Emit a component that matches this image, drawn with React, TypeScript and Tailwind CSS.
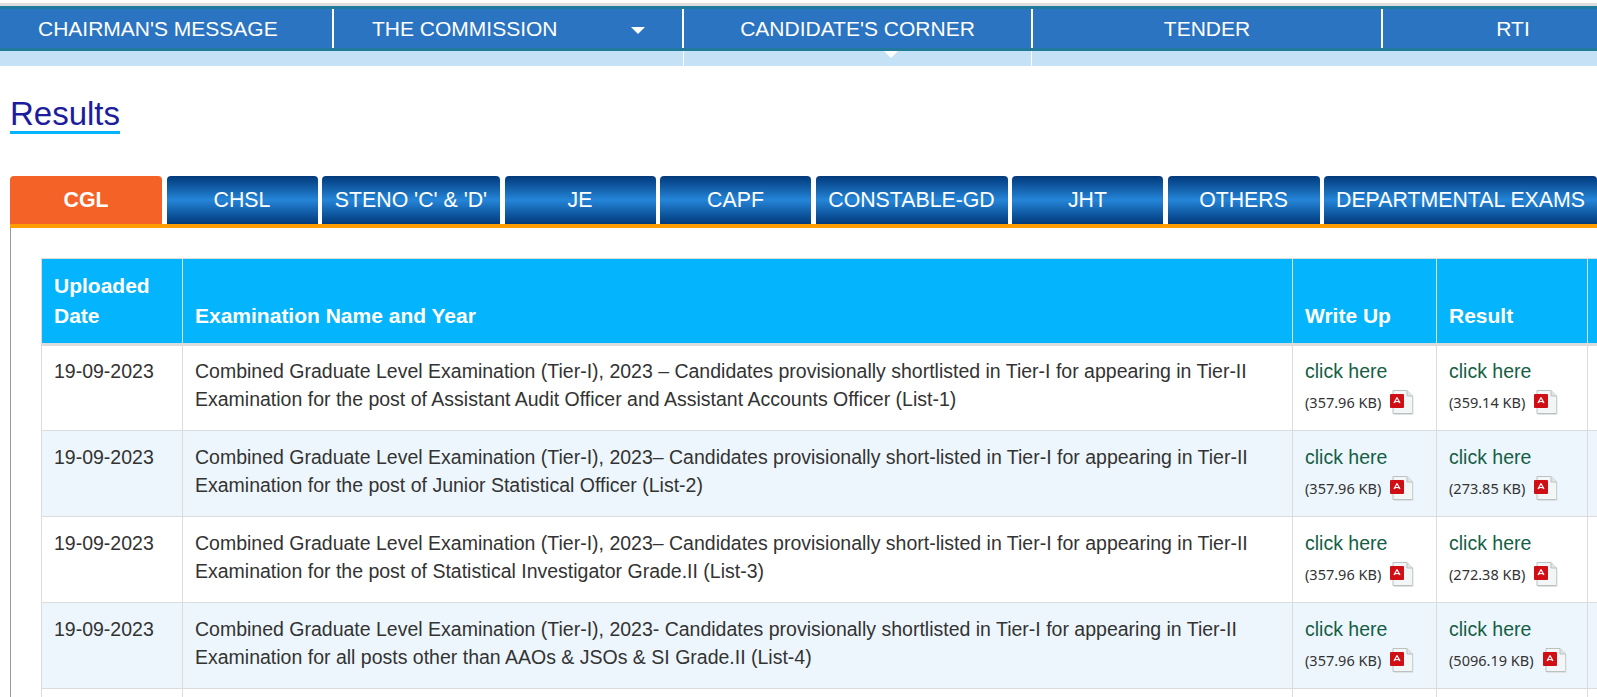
const rows = [
  {
    date: "19-09-2023",
    name: "Combined Graduate Level Examination (Tier-I), 2023 – Candidates provisionally shortlisted in Tier-I for appearing in Tier-II Examination for the post of Assistant Audit Officer and Assistant Accounts Officer (List-1)",
    writeUp: "(357.96 KB)",
    result: "(359.14 KB)",
  },
  {
    date: "19-09-2023",
    name: "Combined Graduate Level Examination (Tier-I), 2023– Candidates provisionally short-listed in Tier-I for appearing in Tier-II Examination for the post of Junior Statistical Officer (List-2)",
    writeUp: "(357.96 KB)",
    result: "(273.85 KB)",
  },
  {
    date: "19-09-2023",
    name: "Combined Graduate Level Examination (Tier-I), 2023– Candidates provisionally short-listed in Tier-I for appearing in Tier-II Examination for the post of Statistical Investigator Grade.II (List-3)",
    writeUp: "(357.96 KB)",
    result: "(272.38 KB)",
  },
  {
    date: "19-09-2023",
    name: "Combined Graduate Level Examination (Tier-I), 2023- Candidates provisionally shortlisted in Tier-I for appearing in Tier-II Examination for all posts other than AAOs & JSOs & SI Grade.II (List-4)",
    writeUp: "(357.96 KB)",
    result: "(5096.19 KB)",
  },
  { date: "", name: "", writeUp: "", result: "" },
];

const tabs = [
  { name: "CHSL", w: "w-[151px]" },
  { name: "STENO 'C' & 'D'", w: "w-[178px]" },
  { name: "JE", w: "w-[151px]" },
  { name: "CAPF", w: "w-[151px]" },
  { name: "CONSTABLE-GD", w: "w-[192px]" },
  { name: "JHT", w: "w-[151px]" },
  { name: "OTHERS", w: "w-[152px]" },
  { name: "DEPARTMENTAL EXAMS", w: "w-[273px]" },
];

// pdf file icon
const PdfIcon = () => (
  <svg width="24" height="25" viewBox="0 0 24 25" className="ml-[9px] shrink-0">
    <path d="M3 0.5h14l5.5 5.5v17.5H3z" fill="#f2f6f6" stroke="#b9c1c1" />
    <path d="M17 0.5V6h5.5" fill="#dfe5e5" stroke="#b9c1c1" />
    <path d="M4 24.5h19V7" fill="none" stroke="#dde2e2" />
    <rect x="0" y="4" width="14" height="14" rx="1" fill="#d00f15" />
    <path d="M7 7.5 L10 13 M7 7.5 L4 13 M4 12.5 Q7 10.5 10 12.5" fill="none" stroke="#fff" strokeWidth="1.2" />
  </svg>
);

const FileCell = ({ size, first }: { size: string; first: boolean }) => (
  <td className={`border border-[#dcdcdc] px-3 pb-[9px] align-top ${first ? "pt-[11px]" : "pt-[12px]"}`}>
    <a className="block text-[19.5px] leading-[28px] text-[#155e45]">click here</a>
    <div className="mt-[3px] flex items-center font-['Noto_Sans','Open_Sans',sans-serif] text-[14.5px] text-[#333]">
      {size}
      <PdfIcon />
    </div>
  </td>
);

export default function App() {
  return (
    <div className="h-[697px] w-full overflow-hidden bg-white font-['Liberation_Sans',Arial,sans-serif]">
      <div className="pt-[3px]">
        <div className="h-[3px] bg-[#dddddd]" />
        <div className="flex h-[45px] overflow-hidden border-y-[3px] border-[#217a9c] bg-[#2b74c2] text-[21px] leading-[39px] text-white">
          <div className="w-[332px] shrink-0 pl-[38px]">CHAIRMAN'S MESSAGE</div>
          <div className="relative flex w-[350px] shrink-0 border-l-2 border-white pl-[38px]">
            THE COMMISSION
            <span className="absolute left-[297px] top-[18px] border-x-[7px] border-t-[7px] border-x-transparent border-t-white" />
          </div>
          <div className="w-[349px] shrink-0 border-l-2 border-white text-center">CANDIDATE'S CORNER</div>
          <div className="w-[350px] shrink-0 border-l-2 border-white text-center">TENDER</div>
          <div className="w-[262px] shrink-0 border-l-2 border-white text-center">RTI</div>
        </div>
        <div className="flex h-[15px] bg-[#c5e1f5]">
          <div className="w-[684px] border-r border-white" />
          <div className="relative w-[348px] border-r border-white">
            <span className="absolute left-[200px] top-0 border-x-[7px] border-t-[7px] border-x-transparent border-t-white" />
          </div>
        </div>
      </div>

      <div className="pl-[10px] pt-[31px]">
        <h1 className="w-[110px] border-b-[3px] border-[#04b4fc] text-[33px] leading-[34px] text-[#1c1c9c]">
          Results
        </h1>

        <div className="mt-[42px] flex h-[48px] gap-[4.5px] text-[21.3px] text-white">
          <div className="flex w-[152px] shrink-0 items-center justify-center rounded-t bg-[#f56227] pt-px font-bold">CGL</div>
          {tabs.map((tab) => (
            <div
              key={tab.name}
              className={`${tab.w} flex shrink-0 items-center justify-center whitespace-nowrap rounded-t bg-gradient-to-b from-[#033a7c] via-[#2585d8] to-[#033a7c] pt-px`}
            >
              {tab.name}
            </div>
          ))}
        </div>
        <div className="h-[4px] bg-[#ff9c00]" />

        <div className="border-l border-[#999999] pl-[30px] pt-[30px]">
          <table className="w-[1600px] table-fixed border-collapse text-[19.5px] leading-[28px] text-[#333]">
            <colgroup>
              <col className="w-[141px]" />
              <col className="w-[1110px]" />
              <col className="w-[144px]" />
              <col className="w-[151px]" />
              <col />
            </colgroup>
            <thead>
              <tr className="h-[86px] border-b-[3px] border-[#dcdcdc] bg-[#04b4fc] text-left align-bottom text-[21px] font-bold leading-[30px] text-white">
                <th className="border border-[#dcdcdc] px-3 pb-[12px]">Uploaded Date</th>
                <th className="border border-[#dcdcdc] px-3 pb-[12px]">Examination Name and Year</th>
                <th className="border border-[#dcdcdc] px-3 pb-[12px]">Write Up</th>
                <th className="border border-[#dcdcdc] px-3 pb-[12px]">Result</th>
                <th className="border border-[#dcdcdc]" />
              </tr>
            </thead>
            <tbody>
              {rows.map((row, i) => (
                <tr key={i} className={`h-[86px] ${i % 2 ? "bg-[#edf6fc]" : "bg-white"}`}>
                  <td className={`border border-[#dcdcdc] px-3 align-top ${i === 0 ? "pt-[11px]" : "pt-[12px]"}`}>{row.date}</td>
                  <td className={`border border-[#dcdcdc] px-3 align-top ${i === 0 ? "pt-[11px]" : "pt-[12px]"}`}>{row.name}</td>
                  {row.writeUp ? <FileCell size={row.writeUp} first={i === 0} /> : <td className="border border-[#dcdcdc]" />}
                  {row.result ? <FileCell size={row.result} first={i === 0} /> : <td className="border border-[#dcdcdc]" />}
                  <td className="border border-[#dcdcdc]" />
                </tr>
              ))}
            </tbody>
          </table>
        </div>
      </div>
    </div>
  );
}
